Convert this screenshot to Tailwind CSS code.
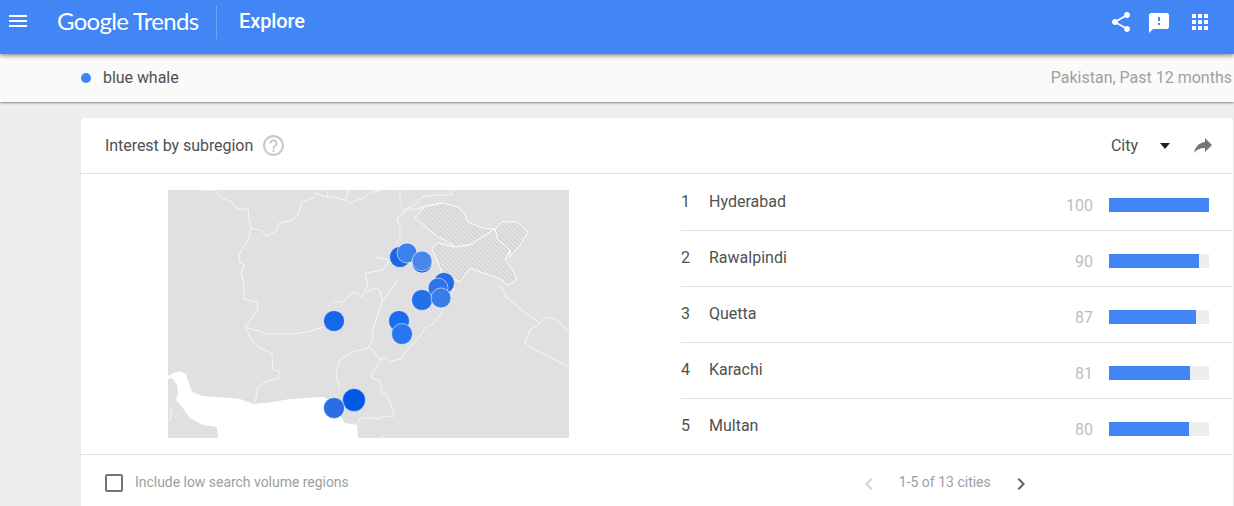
<!DOCTYPE html>
<html lang="en">
<head>
  <meta charset="UTF-8" />
  <meta name="viewport" content="width=device-width, initial-scale=1" />
  <title>Google Trends - Explore</title>
  <script src="https://cdn.jsdelivr.net/npm/@tailwindcss/browser@4"></script>
</head>
<body class="bg-[#eeeeee] h-[506px] overflow-hidden font-['Roboto',sans-serif] text-[16px] text-[#3c4043]">
  <!-- top bar -->
  <header class="relative z-20 h-[54px] bg-[#4285f4] flex items-start text-white shadow-[0_2px_4px_rgba(0,0,0,0.4)]">
    <svg class="w-6 h-6 ml-[6px] mt-[9px] fill-white" viewBox="0 0 24 24"><path d="M3 18h18v-2H3v2zm0-5h18v-2H3v2zm0-7v2h18V6H3z"/></svg>
    <div class="ml-[27px] mt-[4px] h-[33px] w-[160px] flex items-center font-['Lato',sans-serif] text-[24px] leading-[30px] tracking-[-0.7px] whitespace-nowrap">Google Trends</div>
    <div class="mt-[6px] h-[33px] w-px bg-white/25 -ml-[1px]"></div>
    <div class="ml-[22px] mt-[7px] text-[20px] leading-[28px] font-medium tracking-[-0.1px]">Explore</div>
    <div class="ml-auto flex items-start">
      <svg class="w-6 h-6 mt-[10px] fill-white" viewBox="0 0 24 24"><path d="M18 16.08c-.76 0-1.44.3-1.96.77L8.91 12.7c.05-.23.09-.46.09-.7s-.04-.47-.09-.7l7.05-4.11c.54.5 1.25.81 2.04.81 1.66 0 3-1.34 3-3s-1.34-3-3-3-3 1.34-3 3c0 .24.04.47.09.7L8.04 9.81C7.5 9.31 6.79 9 6 9c-1.66 0-3 1.34-3 3s1.34 3 3 3c.79 0 1.5-.31 2.04-.81l7.12 4.16c-.05.21-.08.43-.08.65 0 1.61 1.31 2.92 2.92 2.92 1.61 0 2.92-1.31 2.92-2.92s-1.31-2.92-2.92-2.92z"/></svg>
      <svg class="w-6 h-6 ml-[14px] mt-[11px] fill-white" viewBox="0 0 24 24"><path d="M20 2H4c-1.1 0-1.99.9-1.99 2L2 22l4-4h14c1.1 0 2-.9 2-2V4c0-1.1-.9-2-2-2zm-7 12h-2v-2h2v2zm0-4h-2V6h2v4z"/></svg>
      <svg class="w-6 h-6 ml-[17px] mr-[22px] mt-[10px] fill-white" viewBox="0 0 24 24"><path d="M4 8h4V4H4v4zm6 12h4v-4h-4v4zm-6 0h4v-4H4v4zm0-6h4v-4H4v4zm6 0h4v-4h-4v4zm6-10v4h4V4h-4zm-6 4h4V4h-4v4zm6 6h4v-4h-4v4zm0 6h4v-4h-4v4z"/></svg>
    </div>
  </header>

  <!-- search term strip -->
  <div class="relative z-10 h-[48px] bg-[#fafafa] flex items-center pl-[81px] pr-[2px] shadow-[0_1px_2px_rgba(0,0,0,0.45)]">
    <span class="w-[10px] h-[10px] rounded-full bg-[#4285f4]"></span>
    <span class="ml-3 text-[#505050] tracking-[-0.05px]">blue whale</span>
    <span class="ml-auto text-[#a0a0a0]">Pakistan, Past 12 months</span>
  </div>

  <!-- card -->
  <section class="mt-[16px] ml-[81px] mr-px bg-white rounded-[2px] shadow-[0_0_1px_rgba(0,0,0,0.15)]">
    <div class="h-[56px] border-b border-[#e0e0e0] flex items-center pl-6">
      <span class="text-[#505050] tracking-[-0.05px]">Interest by subregion</span>
      <svg class="w-[25px] h-[25px] ml-[8px] -mt-px fill-[#c8c8c8]" viewBox="0 0 24 24"><path d="M11 18h2v-2h-2v2zm1-16C6.48 2 2 6.48 2 12s4.48 10 10 10 10-4.48 10-10S17.52 2 12 2zm0 18c-4.41 0-8-3.59-8-8s3.59-8 8-8 8 3.59 8 8-3.59 8-8 8zm0-14c-2.21 0-4 1.79-4 4h2c0-1.1.9-2 2-2s2 .9 2 2c0 2-3 1.75-3 5h2c0-2.25 3-2.5 3-5 0-2.21-1.79-4-4-4z"/></svg>
      <span class="ml-auto -translate-x-px text-[#505050]">City</span>
      <span class="ml-[21px] w-0 h-0 border-x-[5.5px] border-x-transparent border-t-[6px] border-t-[#212121]"></span>
      <svg class="w-6 h-6 ml-[21px] mr-[18px] -mt-px fill-[#757575]" viewBox="0 0 24 24"><path d="M14 9V5l7 7-7 7v-4.1c-5 0-8.5 1.6-11 5.1 1-5 4-10 11-11z"/></svg>
    </div>

    <div class="flex">
      <!-- map -->
      <div class="w-[600px] shrink-0 pl-[87px] pt-4">
        <svg class="block w-[401px] h-[248px] bg-[#e0e0e0]" viewBox="168 190 401 248">
          <defs>
            <pattern id="hatch" width="3.2" height="3.2" patternUnits="userSpaceOnUse" patternTransform="rotate(45)">
              <rect width="3.2" height="3.2" fill="#e3e3e3"/>
              <rect width="3.2" height="1.2" fill="#d0d0d0"/>
            </pattern>
          </defs>
          <!-- sea -->
          <path fill="#fff" d="M168 376L174 373L180 371L186 374L189 384L192 392L203 396L217 397L240 399L253 404L273 402L290 399L323 397L330 400L345 423L357 425L358 438L218 438L217 427L203 425L190 418L179 403L176 400L178 393L177 385L172 378L168 379Z"/>
          <!-- disputed areas -->
          <g fill="url(#hatch)" stroke="#fff" stroke-width="0.9" stroke-linejoin="round">
            <path d="M415 218L425 206L443 203L458 207L465 215L468 222L482 228L495 229L470 245L455 247L445 240L438 237L427 228Z"/>
            <path d="M438 243L455 247L470 245L495 229L498 240L510 250L505 260L513 270L517 280L508 285L498 278L483 273L470 268L460 282L442 273L438 263L432 248Z"/>
            <path d="M495 229L502 222L517 222L528 232L520 245L510 257L510 250L498 240Z"/>
          </g>
          <!-- borders -->
          <g fill="none" stroke="#fff" stroke-width="0.8" stroke-linejoin="round" opacity="0.9">
            <path d="M205 190L215 190L223 199L232 202L237 209L248 209L249 220L251 228L248 240L243 248L239 255L240 263L245 265L241 272L244 285L244 299L257 302L258 310L245 327L253 342L260 348L272 353L273 370L279 371L278 379L267 381L258 387L255 403"/>
            <path d="M245 327L268 334L292 334L307 332L323 327"/>
            <path d="M251 228L262 231L266 236L277 231L278 224L292 220L298 215L302 202L313 198L316 193L325 197L335 197L345 200L350 203L363 198L370 193L382 190"/>
            <path d="M328 190L327 197M348 190L346 200"/>
            <path d="M327 307L333 302L343 302L352 293L357 293L362 297L368 285L365 273L383 270L390 260L375 257M365 293L375 288L380 290L382 302L398 280"/>
            <path d="M368 348L353 352L340 359L336 373L340 390"/>
            <path d="M400 190L400 203L403 210L415 205L422 197L437 195L452 195L450 190"/>
            <path d="M442 203L420 208L407 210L397 218L400 227L400 237L395 245"/>
            <path d="M382 302L375 323L372 333L373 340L368 348L373 350L380 360L383 357"/>
            <path d="M455 288L443 310L435 322L425 328L420 336L407 350L402 358L390 362L383 357L372 373L372 378L380 381L382 393L387 395L394 413L393 417L385 416L377 419L370 417"/>
            <path d="M500 285L507 298L510 300L522 310L540 323L545 317L555 319L569 331M540 323L530 330L525 343L530 347L553 359L569 367"/>
            <path d="M172 407L170 420L168 421M357 425L360 418L370 418M380 438L384 436"/>
          </g>
          <!-- city markers -->
          <g stroke="#fff" stroke-opacity="0.55" stroke-width="1">
            <circle cx="400" cy="257" r="10.5" fill="#1f66e5"/>
            <circle cx="407" cy="253" r="10" fill="#3b80ef"/>
            <circle cx="422" cy="263" r="10" fill="#1059e0"/>
            <circle cx="422" cy="261" r="10" fill="#4a87ec"/>
            <circle cx="444" cy="283" r="10.5" fill="#266de8"/>
            <circle cx="438" cy="288" r="10" fill="#2e74ea"/>
            <circle cx="422" cy="300" r="10.5" fill="#2570e8"/>
            <circle cx="441" cy="298" r="10" fill="#3a7de8"/>
            <circle cx="334" cy="321" r="10.5" fill="#1668ea"/>
            <circle cx="399" cy="321" r="10.5" fill="#1b6cee"/>
            <circle cx="402" cy="334" r="10.5" fill="#2a76ee"/>
            <circle cx="354" cy="400" r="11.5" fill="#0259e8"/>
            <circle cx="334" cy="408" r="10.5" fill="#2a6ee6"/>
          </g>
        </svg>
      </div>

      <!-- ranking -->
      <div class="flex-1">
        <div class="h-[57px] border-b border-[#e0e0e0] flex items-start pr-6">
          <span class="w-[29px] mt-[18px] leading-5 text-[#505050]">1</span>
          <span class="mt-[18px] -ml-px leading-5 text-[#505050]">Hyderabad</span>
          <span class="ml-auto mt-[22px] leading-5 text-[#bdbdbd]">100</span>
          <div class="ml-4 mt-6 w-[100px] h-[14px] bg-[#eeeeee]"><div class="h-full bg-[#4285f4]" style="width:100%"></div></div>
        </div>
        <div class="h-[56px] border-b border-[#e0e0e0] flex items-start pr-6">
          <span class="w-[29px] mt-[17px] leading-5 text-[#505050]">2</span>
          <span class="mt-[17px] -ml-px leading-5 text-[#505050]">Rawalpindi</span>
          <span class="ml-auto mt-[21px] leading-5 text-[#bdbdbd]">90</span>
          <div class="ml-4 mt-[23px] w-[100px] h-[14px] bg-[#eeeeee]"><div class="h-full bg-[#4285f4]" style="width:90%"></div></div>
        </div>
        <div class="h-[56px] border-b border-[#e0e0e0] flex items-start pr-6">
          <span class="w-[29px] mt-[17px] leading-5 text-[#505050]">3</span>
          <span class="mt-[17px] -ml-px leading-5 text-[#505050]">Quetta</span>
          <span class="ml-auto mt-[21px] leading-5 text-[#bdbdbd]">87</span>
          <div class="ml-4 mt-[23px] w-[100px] h-[14px] bg-[#eeeeee]"><div class="h-full bg-[#4285f4]" style="width:87%"></div></div>
        </div>
        <div class="h-[56px] border-b border-[#e0e0e0] flex items-start pr-6">
          <span class="w-[29px] mt-[17px] leading-5 text-[#505050]">4</span>
          <span class="mt-[17px] -ml-px leading-5 text-[#505050]">Karachi</span>
          <span class="ml-auto mt-[21px] leading-5 text-[#bdbdbd]">81</span>
          <div class="ml-4 mt-[23px] w-[100px] h-[14px] bg-[#eeeeee]"><div class="h-full bg-[#4285f4]" style="width:81%"></div></div>
        </div>
        <div class="h-[55px] flex items-start pr-6">
          <span class="w-[29px] mt-[17px] leading-5 text-[#505050]">5</span>
          <span class="mt-[17px] -ml-px leading-5 text-[#505050]">Multan</span>
          <span class="ml-auto mt-[21px] leading-5 text-[#bdbdbd]">80</span>
          <div class="ml-4 mt-[23px] w-[100px] h-[14px] bg-[#eeeeee]"><div class="h-full bg-[#4285f4]" style="width:80%"></div></div>
        </div>
      </div>
    </div>

    <!-- footer -->
    <div class="h-[56px] border-t border-[#e0e0e0] flex items-center pl-6">
      <span class="w-[18px] h-[18px] border-2 border-[#757575] rounded-[2px]"></span>
      <span class="ml-3 text-[14px] text-[#9e9e9e] tracking-[-0.03px]">Include low search volume regions</span>
      <svg class="w-6 h-6 ml-[508px] mt-[2px] fill-[#d0d0d0]" viewBox="0 0 24 24"><path d="M15.41 7.41L14 6l-6 6 6 6 1.41-1.41L10.83 12z"/></svg>
      <span class="ml-[18px] text-[14px] text-[#9e9e9e]">1-5 of 13 cities</span>
      <svg class="w-6 h-6 ml-[18px] mt-[2px] fill-[#616161]" viewBox="0 0 24 24"><path d="M10 6L8.59 7.41 13.17 12l-4.58 4.59L10 18l6-6z"/></svg>
    </div>
  </section>
</body>
</html>
